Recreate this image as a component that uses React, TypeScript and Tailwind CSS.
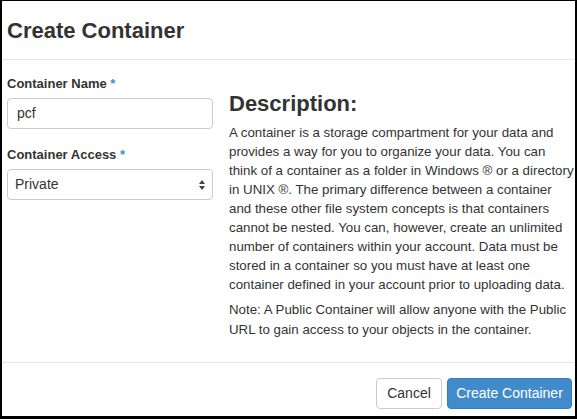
import React from "react";

const font = { fontFamily: '"Liberation Sans", Arial, sans-serif' };

const para1 = [
  "A container is a storage compartment for your data and",
  "provides a way for you to organize your data. You can",
  "think of a container as a folder in Windows ® or a directory",
  "in UNIX ®. The primary difference between a container",
  "and these other file system concepts is that containers",
  "cannot be nested. You can, however, create an unlimited",
  "number of containers within your account. Data must be",
  "stored in a container so you must have at least one",
  "container defined in your account prior to uploading data.",
];

const para2 = [
  "Note: A Public Container will allow anyone with the Public",
  "URL to gain access to your objects in the container.",
];

export default function App() {
  return (
    <div
      className="w-[577px] h-[419px] bg-white border-t border-l-2 border-r-2 border-b-[3px] border-black flex flex-col overflow-hidden text-[#333]"
      style={font}
    >
      <div className="h-[59px] shrink-0 border-b border-[#e5e5e5] pl-[5px] pt-[17px]">
        <h4 className="text-[22px] leading-[26px] font-bold text-[#333]">Create Container</h4>
      </div>
      <div className="flex-1 flex pl-[5px] pt-[15px] overflow-hidden">
        <div className="w-[206px] shrink-0 flex flex-col">
          <label className="text-[13px] leading-[18px] font-bold">
            Container Name <span className="text-[#428bca]">*</span>
          </label>
          <div className="mt-[5px] h-[31px] border border-[#ccc] rounded-[4px] flex items-center pl-[9px] text-[14px]">
            pcf
          </div>
          <label className="mt-[17px] text-[13px] leading-[18px] font-bold">
            Container Access <span className="text-[#428bca]">*</span>
          </label>
          <div className="mt-[5px] h-[31px] border border-[#ccc] rounded-[4px] flex items-center justify-between pl-[7px] pr-[6px] text-[14px]">
            <span>Private</span>
            <svg width="8" height="12" viewBox="0 0 8 12">
              <path d="M4 1 L7 5 L1 5 Z" fill="#444" />
              <path d="M4 11 L7 7 L1 7 Z" fill="#444" />
            </svg>
          </div>
        </div>
        <div className="ml-[16px] w-[350px] shrink-0 text-[13.3px] leading-[19px]">
          <h3 className="mt-[16px] text-[22px] leading-[26px] font-bold mb-[6px]">Description:</h3>
          <p className="mb-[6px]">
            {para1.map((l) => (
              <span key={l} className="block whitespace-nowrap">
                {l}
              </span>
            ))}
          </p>
          <p className="leading-[20px]">
            {para2.map((l) => (
              <span key={l} className="block whitespace-nowrap">
                {l}
              </span>
            ))}
          </p>
        </div>
      </div>
      <div className="h-[54px] shrink-0 border-t border-[#e5e5e5] flex justify-end items-start pt-[15px] pr-[3px] gap-[5px]">
        <button className="h-[31px] w-[66px] border border-[#ccc] rounded-[4px] bg-white text-[14px] text-[#333]">
          Cancel
        </button>
        <button className="h-[31px] w-[125px] border border-[#357ebd] rounded-[4px] bg-[#428bca] text-[14px] text-white">
          Create Container
        </button>
      </div>
    </div>
  );
}
